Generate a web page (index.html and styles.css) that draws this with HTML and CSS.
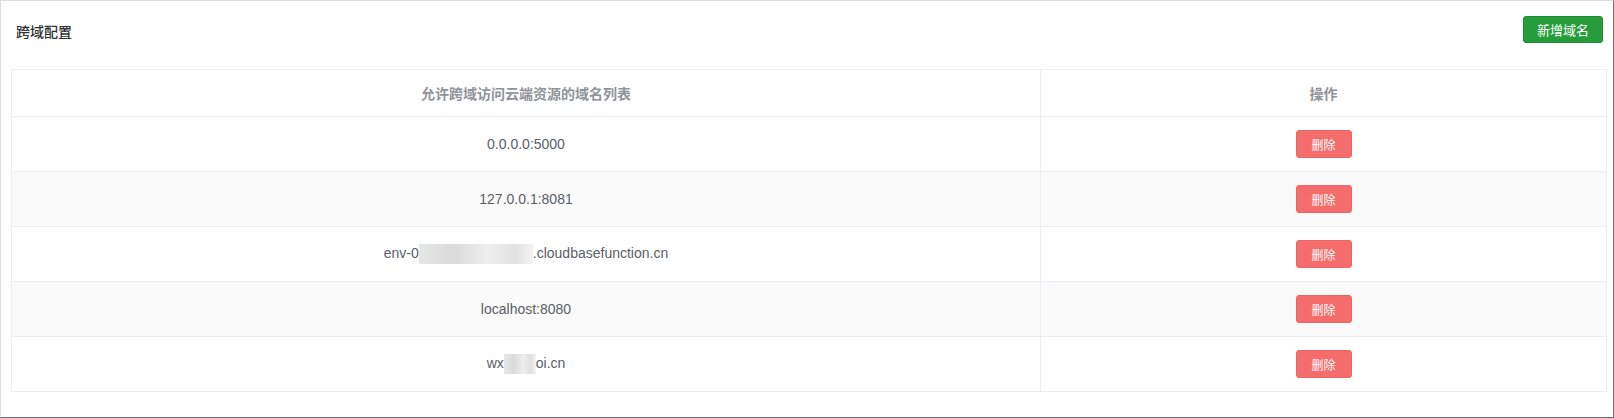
FILE: index.html
```html
<!DOCTYPE html>
<html lang="zh-CN">
<head>
    <meta charset="UTF-8">
    <meta name="viewport" content="width=device-width, initial-scale=1.0">
    <title>跨域配置</title>
    <link rel="stylesheet" href="styles.css">
</head>
<body>
    <div class="panel">
        <div class="panel-header">
            <h3 class="panel-title">跨域配置</h3>
            <button class="btn btn-add">新增域名</button>
        </div>
        <table class="domain-table">
            <thead>
                <tr>
                    <th class="col-domain">允许跨域访问云端资源的域名列表</th>
                    <th>操作</th>
                </tr>
            </thead>
            <tbody>
                <tr>
                    <td>0.0.0.0:5000</td>
                    <td><button class="btn btn-del">删除</button></td>
                </tr>
                <tr>
                    <td>127.0.0.1:8081</td>
                    <td><button class="btn btn-del">删除</button></td>
                </tr>
                <tr>
                    <td>env-0<span class="mask mask-long"></span>.cloudbasefunction.cn</td>
                    <td><button class="btn btn-del">删除</button></td>
                </tr>
                <tr>
                    <td>localhost:8080</td>
                    <td><button class="btn btn-del">删除</button></td>
                </tr>
                <tr>
                    <td>wx<span class="mask mask-short"></span>oi.cn</td>
                    <td><button class="btn btn-del">删除</button></td>
                </tr>
            </tbody>
        </table>
    </div>
</body>
</html>
```

FILE: styles.css
```css
body {
    margin: 0;
    padding: 0;
    background-color: #fff;
    font-family: "Liberation Sans", "Noto Sans CJK SC", Arial, sans-serif;
    color: #606266;
}
.panel {
    box-sizing: border-box;
    width: 1614px;
    height: 418px;
    background-color: #fff;
    border-top: 1px solid #dcdcdc;
    border-left: 1px solid #dcdcdc;
    border-right: 1px solid #6e6e6e;
    border-bottom: 1px solid #6e6e6e;
    padding: 15px 6px 25px 10px;
}
.panel-header {
    display: flex;
    align-items: center;
    justify-content: space-between;
    padding: 0 4px 0 5px;
    height: 27px;
    margin-bottom: 26px;
}
.panel-title {
    margin: 0;
    padding-top: 3px;
    font-family: "Noto Sans CJK SC", sans-serif;
    font-size: 14px;
    font-weight: 500;
    color: #303133;
}
.btn {
    font-family: "Noto Sans CJK SC", sans-serif;
    color: #fff;
    cursor: pointer;
    border-radius: 3px;
    padding: 0;
}
.btn-add {
    width: 80px;
    height: 27px;
    font-size: 13px;
    background-color: #269c3b;
    border: 1px solid #1f8d33;
}
.btn-del {
    width: 56px;
    height: 28px;
    font-size: 12px;
    background-color: #f56c6c;
    border: 1px solid #ee6363;
}
.domain-table {
    width: 1596px;
    border-collapse: collapse;
    table-layout: fixed;
    border: 1px solid #ebeef5;
}
.domain-table th,
.domain-table td {
    text-align: center;
    border-bottom: 1px solid #ebeef5;
    padding: 0;
}
.domain-table th + th,
.domain-table td + td {
    border-left: 1px solid #ebeef5;
}
.domain-table th {
    height: 46px;
    font-family: "Noto Sans CJK SC", sans-serif;
    font-size: 14px;
    font-weight: 700;
    color: #909399;
}
.col-domain {
    width: 1028px;
}
.domain-table td {
    height: 54px;
    font-size: 14px;
    color: #5a5e66;
}
.domain-table tbody tr:nth-child(even) {
    background-color: #fafafa;
}
.mask {
    display: inline-block;
    height: 20px;
    vertical-align: -6px;
    background: linear-gradient(90deg, #e4e4e4, #d6d6d6 30%, #ececec 60%, #dedede 85%, #f2f2f2);
    opacity: 0.9;
}
.mask-long {
    width: 114px;
}
.mask-short {
    width: 32px;
}
```
